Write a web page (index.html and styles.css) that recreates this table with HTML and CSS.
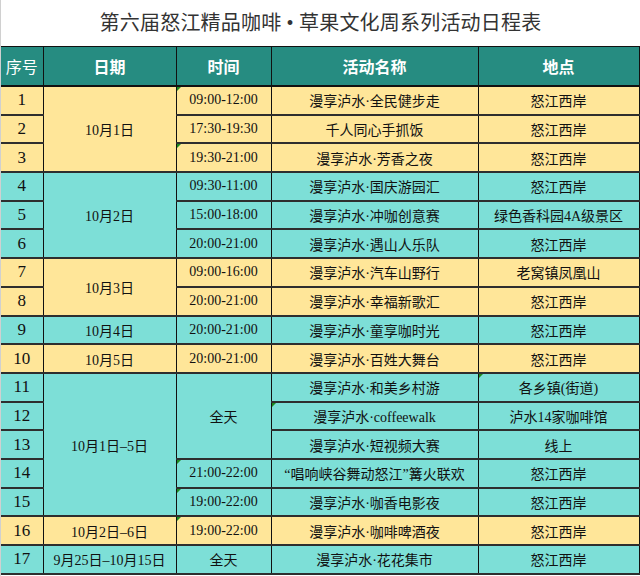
FILE: index.html
```html
<!DOCTYPE html>
<html lang="zh">
<head>
<meta charset="utf-8">
<link rel="stylesheet" href="styles.css">
</head>
<body>
<div class="page">
  <h1 class="title">第六届怒江精品咖啡 • 草果文化周系列活动日程表</h1>
  <table class="sched">
    <colgroup>
      <col class="c1"><col class="c2"><col class="c3"><col class="c4"><col class="c5">
    </colgroup>
    <thead>
      <tr><th class="th-light">序号</th><th>日期</th><th>时间</th><th>活动名称</th><th>地点</th></tr>
    </thead>
    <tbody>
      <tr class="y"><td class="n">1</td><td rowspan="3">10月1日</td><td class="tri">09:00-12:00</td><td>漫享泸水·全民健步走</td><td>怒江西岸</td></tr>
      <tr class="y"><td class="n">2</td><td>17:30-19:30</td><td>千人同心手抓饭</td><td>怒江西岸</td></tr>
      <tr class="y"><td class="n">3</td><td class="tri">19:30-21:00</td><td>漫享泸水·芳香之夜</td><td>怒江西岸</td></tr>
      <tr class="c"><td class="n">4</td><td rowspan="3">10月2日</td><td>09:30-11:00</td><td>漫享泸水·国庆游园汇</td><td>怒江西岸</td></tr>
      <tr class="c"><td class="n">5</td><td>15:00-18:00</td><td>漫享泸水·冲咖创意赛</td><td>绿色香科园4A级景区</td></tr>
      <tr class="c"><td class="n">6</td><td>20:00-21:00</td><td>漫享泸水·遇山人乐队</td><td>怒江西岸</td></tr>
      <tr class="y"><td class="n">7</td><td rowspan="2">10月3日</td><td>09:00-16:00</td><td>漫享泸水·汽车山野行</td><td>老窝镇凤凰山</td></tr>
      <tr class="y"><td class="n">8</td><td>20:00-21:00</td><td>漫享泸水·幸福新歌汇</td><td>怒江西岸</td></tr>
      <tr class="c"><td class="n">9</td><td>10月4日</td><td>20:00-21:00</td><td>漫享泸水·童享咖时光</td><td>怒江西岸</td></tr>
      <tr class="y"><td class="n">10</td><td>10月5日</td><td>20:00-21:00</td><td>漫享泸水·百姓大舞台</td><td>怒江西岸</td></tr>
      <tr class="c"><td class="n">11</td><td rowspan="5">10月1日–5日</td><td rowspan="3">全天</td><td>漫享泸水·和美乡村游</td><td class="tri">各乡镇(街道)</td></tr>
      <tr class="c"><td class="n">12</td><td class="tri">漫享泸水·coffeewalk</td><td>泸水14家咖啡馆</td></tr>
      <tr class="c"><td class="n">13</td><td>漫享泸水·短视频大赛</td><td>线上</td></tr>
      <tr class="c"><td class="n">14</td><td class="tri">21:00-22:00</td><td>“唱响峡谷舞动怒江”篝火联欢</td><td>怒江西岸</td></tr>
      <tr class="c"><td class="n">15</td><td class="tri">19:00-22:00</td><td>漫享泸水·咖香电影夜</td><td>怒江西岸</td></tr>
      <tr class="y"><td class="n">16</td><td>10月2日–6日</td><td class="tri">19:00-22:00</td><td>漫享泸水·咖啡啤酒夜</td><td>怒江西岸</td></tr>
      <tr class="c"><td class="n">17</td><td>9月25日–10月15日</td><td>全天</td><td>漫享泸水·花花集市</td><td>怒江西岸</td></tr>
    </tbody>
  </table>
</div>
</body>
</html>
```

FILE: styles.css
```css
html, body {
  margin: 0;
  padding: 0;
  background: #ffffff;
}
.page {
  width: 639px;
  border-left: 1px solid #d0d0d0;
  height: 576px;
  overflow: hidden;
}
.title {
  margin: 0;
  height: 46px;
  line-height: 46px;
  text-align: center;
  font-family: "Liberation Serif", "Noto Sans CJK SC", serif;
  font-weight: normal;
  font-size: 20px;
  color: #333333;
  letter-spacing: 0.2px;
}
.sched {
  border-collapse: collapse;
  table-layout: fixed;
  width: 638px;
  font-family: "Liberation Serif", "Noto Sans CJK SC", serif;
  font-size: 14px;
  color: #111111;
}
.c1 { width: 42px; }
.c2 { width: 133px; }
.c3 { width: 95px; }
.c4 { width: 207px; }
.c5 { width: 161px; }
.sched th {
  height: 38px;
  background: #268c81;
  color: #ffffff;
  font-family: "Noto Sans CJK SC", sans-serif;
  font-size: 16px;
  font-weight: bold;
  border: 1px solid #111111;
  border-left: 0;
  border-bottom: 2px solid #111111;
  padding: 0;
  text-align: center;
}
.sched th.th-light {
  font-weight: normal;
}
.sched td {
  height: 26.7px;
  padding: 0;
  text-align: center;
  border-right: 1px solid #111111;
  border-bottom: 2px solid #2e2e2e;
  white-space: nowrap;
  position: relative;
}
.sched tr.y td { background: #ffe699; }
.sched tr.c td { background: #7ddfd7; }
.sched td.n {
  font-size: 17px;
}
.sched td.tri::before {
  content: "";
  position: absolute;
  left: 0;
  top: 0;
  width: 0;
  height: 0;
  border-top: 4px solid #1f8a1f;
  border-right: 4px solid transparent;
}
```
